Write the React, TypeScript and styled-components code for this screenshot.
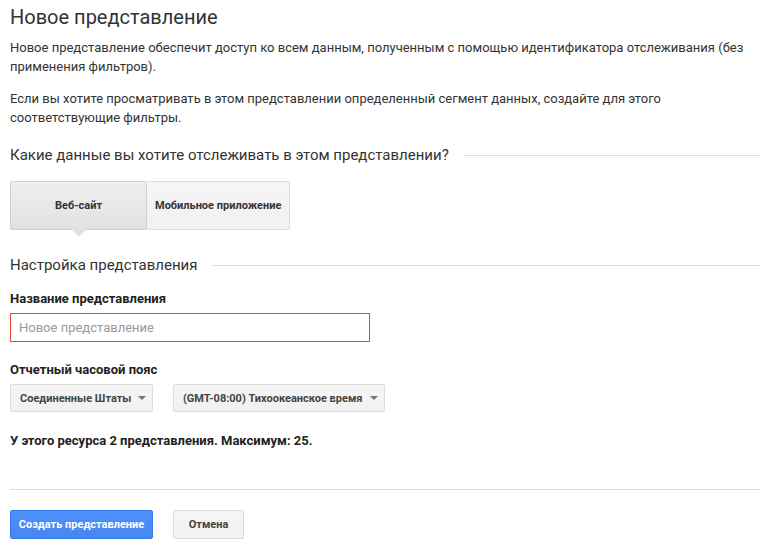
import styled, { createGlobalStyle, css } from "styled-components";

const GlobalStyle = createGlobalStyle`
  body {
    margin: 0;
    background: #fff;
    font-family: Roboto, "Liberation Sans", Arial, sans-serif;
    color: #222;
  }
`;

const Page = styled.div`
  padding: 5px 0 0 10px;
  width: 750px;
`;

const Title = styled.h1`
  margin: 0;
  font-size: 20px;
  font-weight: 400;
  line-height: 24px;
  color: #333;
`;

const Text = styled.p<{ $top: number }>`
  margin: ${(p) => p.$top}px 0 0;
  font-size: 13px;
  line-height: 19px;
  color: #333;
  max-width: 740px;
`;

const SectionHeading = styled.h2<{ $top: number }>`
  display: flex;
  align-items: center;
  margin: ${(p) => p.$top}px 0 0;
  font-size: 15px;
  font-weight: 400;
  line-height: 20px;
  color: #333;

  &::after {
    content: "";
    flex: 1;
    height: 1px;
    background: #ddd;
    margin-left: 14px;
  }
`;

const Toggle = styled.div`
  display: flex;
  margin-top: 16px;
`;

const ToggleButton = styled.button<{ $active?: boolean }>`
  position: relative;
  height: 49px;
  min-width: 137px;
  padding: 0 8px;
  font-family: inherit;
  font-size: 11px;
  font-weight: 700;
  color: #333;
  border: 1px solid #dcdcdc;
  border-radius: 2px;
  background: linear-gradient(#f5f5f5, #f1f1f1);
  cursor: pointer;

  & + & {
    border-left: none;
  }

  ${(p) =>
    p.$active &&
    css`
      background: linear-gradient(#eeeeee, #e2e2e2);
      border-color: #d0d0d0;

      &::after {
        content: "";
        position: absolute;
        left: 50%;
        bottom: -8px;
        margin-left: -8px;
        border-left: 8px solid transparent;
        border-right: 8px solid transparent;
        border-top: 8px solid #e2e2e2;
      }
    `}
`;

const Label = styled.div<{ $top: number }>`
  margin-top: ${(p) => p.$top}px;
  font-size: 13px;
  font-weight: 700;
  line-height: 16px;
  color: #222;
`;

const Input = styled.input`
  display: block;
  box-sizing: border-box;
  margin-top: 6px;
  width: 360px;
  height: 29px;
  padding: 0 8px;
  border: 1px solid #dd4b39;
  font-family: inherit;
  font-size: 13px;
  color: #333;
  outline: none;

  &::placeholder {
    color: #999;
  }
`;

const Row = styled.div<{ $top: number }>`
  display: flex;
  gap: 20px;
  margin-top: ${(p) => p.$top}px;
`;

const Dropdown = styled.button<{ $width: number }>`
  display: flex;
  align-items: center;
  justify-content: space-between;
  box-sizing: border-box;
  width: ${(p) => p.$width}px;
  height: 28px;
  padding: 0 6px 0 9px;
  border: 1px solid #dcdcdc;
  border-radius: 2px;
  background: linear-gradient(#f5f5f5, #f1f1f1);
  font-family: inherit;
  font-size: 11px;
  font-weight: 700;
  color: #444;
  white-space: nowrap;
  cursor: pointer;

  &::after {
    content: "";
    flex: none;
    border-left: 4px solid transparent;
    border-right: 4px solid transparent;
    border-top: 4px solid #777;
    margin-left: 6px;
  }
`;

const Note = styled.div`
  margin-top: 21px;
  font-size: 13px;
  font-weight: 700;
  line-height: 16px;
  color: #222;
`;

const Divider = styled.hr`
  margin: 40px 0 0;
  border: none;
  border-top: 1px solid #ddd;
`;

const Button = styled.button<{ $primary?: boolean; $width: number }>`
  box-sizing: border-box;
  width: ${(p) => p.$width}px;
  height: 29px;
  border-radius: 2px;
  font-family: inherit;
  font-size: 11px;
  font-weight: 700;
  white-space: nowrap;
  cursor: pointer;
  border: 1px solid #dcdcdc;
  background: linear-gradient(#f5f5f5, #f1f1f1);
  color: #444;

  ${(p) =>
    p.$primary &&
    css`
      border-color: #3079ed;
      background: linear-gradient(#4d90fe, #4787ed);
      color: #fff;
    `}
`;

export default function App() {
  return (
    <>
      <GlobalStyle />
      <Page>
        <Title>Новое представление</Title>
        <Text $top={9}>
          Новое представление обеспечит доступ ко всем данным, полученным с помощью
          идентификатора отслеживания (без применения фильтров).
        </Text>
        <Text $top={13}>
          Если вы хотите просматривать в этом представлении определенный сегмент данных,
          создайте для этого соответствующие фильтры.
        </Text>

        <SectionHeading $top={18}>Какие данные вы хотите отслеживать в этом представлении?</SectionHeading>
        <Toggle>
          <ToggleButton $active>Веб-сайт</ToggleButton>
          <ToggleButton>Мобильное приложение</ToggleButton>
        </Toggle>

        <SectionHeading $top={25}>Настройка представления</SectionHeading>
        <Label $top={16}>Название представления</Label>
        <Input placeholder="Новое представление" />

        <Label $top={20}>Отчетный часовой пояс</Label>
        <Row $top={6}>
          <Dropdown $width={143}>Соединенные Штаты</Dropdown>
          <Dropdown $width={212}>(GMT-08:00) Тихоокеанское время</Dropdown>
        </Row>

        <Note>У этого ресурса 2 представления. Максимум: 25.</Note>
        <Divider />

        <Row $top={20}>
          <Button $primary $width={143}>Создать представление</Button>
          <Button $width={71}>Отмена</Button>
        </Row>
      </Page>
    </>
  );
}
